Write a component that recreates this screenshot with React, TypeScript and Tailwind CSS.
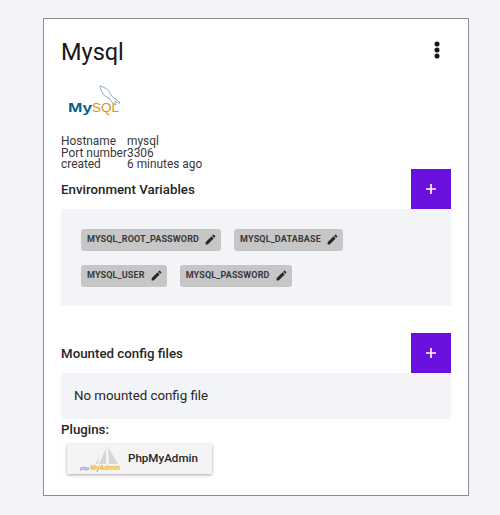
const variables = [
  ["MYSQL_ROOT_PASSWORD", "MYSQL_DATABASE"],
  ["MYSQL_USER", "MYSQL_PASSWORD"],
];

function EditIcon() {
  return (
    <svg viewBox="0 0 24 24" className="w-[13px] h-[13px] ml-[5px] shrink-0" fill="#262626">
      <path d="M3 17.25V21h3.75L17.81 9.94l-3.75-3.75L3 17.25zM20.71 7.04a1 1 0 0 0 0-1.41l-2.34-2.34a1 1 0 0 0-1.41 0l-1.83 1.83 3.75 3.75 1.83-1.83z" />
    </svg>
  );
}

function AddButton() {
  return (
    <button className="w-10 h-10 bg-[#6a11e0] flex items-center justify-center shrink-0" aria-label="add">
      <svg viewBox="0 0 12 12" className="w-[12px] h-[12px]" stroke="white" strokeWidth="1.6">
        <path d="M6 1v10M1 6h10" />
      </svg>
    </button>
  );
}

function Tag({ name }: { name: string }) {
  return (
    <span className="h-[22px] pl-[6px] pr-[4px] rounded-[3px] bg-[#c6c6c6] flex items-center text-[9px] font-bold tracking-[0.15px] text-[#393939]">
      {name}
      <EditIcon />
    </span>
  );
}

function MysqlLogo() {
  return (
    <svg viewBox="0 0 54 30" className="w-[54px] h-[30px] block">
      <path
        d="M33 1c4 1 8 3 10 7 1 3 4 5 7 7 1 1 2 2 3 3-2 0-4-1-5-2 0 1 0 2 1 4-3-1-5-4-7-7-3-1-6-3-7-6-1-2-2-4-2-6z"
        fill="none"
        stroke="#5d87a1"
        strokeWidth="0.7"
      />
      <text x="1" y="26.5" fontSize="13" fontWeight="700" fill="#00618a" fontFamily="'Liberation Sans', sans-serif" textLength="24" lengthAdjust="spacingAndGlyphs">My</text>
      <text x="25" y="26.5" fontSize="12" fill="#e48e00" fontFamily="'Liberation Sans', sans-serif" textLength="27" lengthAdjust="spacingAndGlyphs">SQL</text>
    </svg>
  );
}

function PmaLogo() {
  return (
    <svg viewBox="0 0 42 26" className="w-[42px] h-[26px] block overflow-visible">
      <path d="M26 2l-7 16h7zM28 1l1 17h9zM19 8l-3 10h2z" fill="#d6d6d6" />
      <text x="0" y="24" fontSize="5" fontStyle="italic" fontWeight="700" fill="#8a93c4" fontFamily="'Liberation Sans', sans-serif">php</text>
      <text x="10.5" y="24" fontSize="7.5" fontWeight="700" fill="#f2a93b" fontFamily="'Liberation Sans', sans-serif" textLength="29.5" lengthAdjust="spacingAndGlyphs">MyAdmin</text>
    </svg>
  );
}

export default function App() {
  return (
    <div className="min-h-[515px] bg-[#f4f4f8] pt-[18px] pl-[43px] text-[#161616] font-['Roboto','Noto_Sans',sans-serif]">
      <div className="w-[426px] h-[478px] bg-white border border-[#8d8d8d] px-[17px] pt-[15px]">
        <div className="flex items-center justify-between h-[36px]">
          <h1 className="text-[23.5px] leading-[36px]">Mysql</h1>
          <svg viewBox="0 0 6 18" className="w-[6px] h-[18px] mr-[11px] -mt-[4px]" fill="#161616">
            <circle cx="3" cy="3" r="2.5" />
            <circle cx="3" cy="9" r="2.5" />
            <circle cx="3" cy="15" r="2.5" />
          </svg>
        </div>

        <div className="ml-[6px] mt-[15px]">
          <MysqlLogo />
        </div>

        <div className="mt-[21px] grid grid-cols-[66px_1fr] text-[11.9px] leading-[11.5px] text-[#393939] whitespace-nowrap">
          <span>Hostname</span>
          <span>mysql</span>
          <span>Port number</span>
          <span>3306</span>
          <span>created</span>
          <span>6 minutes ago</span>
        </div>

        <div className="flex items-center justify-between mt-[-2px]">
          <h2 className="text-[13.3px] font-medium text-[#262626] pt-[3px]">Environment Variables</h2>
          <AddButton />
        </div>
        <div className="h-[97px] bg-[#f2f4f8] p-[20px] flex flex-col gap-[14px]">
          {variables.map((row) => (
            <div key={row[0]} className="flex gap-[13px]">
              {row.map((name) => (
                <Tag key={name} name={name} />
              ))}
            </div>
          ))}
        </div>

        <div className="flex items-center justify-between mt-[27px]">
          <h2 className="text-[13.3px] font-medium text-[#262626] pt-[3px]">Mounted config files</h2>
          <AddButton />
        </div>
        <div className="h-[46px] bg-[#f2f4f8] pl-[13px] pt-[1px] flex items-center text-[13.3px] text-[#262626]">
          No mounted config file
        </div>

        <div className="pt-[1px] text-[13.3px] font-medium text-[#262626] leading-[20px]">Plugins:</div>
        <div className="ml-[6px] mt-[4px] w-[145px] h-[30px] bg-[#f4f4f4] shadow-[0_1px_3px_rgba(0,0,0,0.35)] flex items-center">
          <div className="ml-[13px] mr-[6px]">
            <PmaLogo />
          </div>
          <span className="text-[11.6px] font-medium text-[#262626]">PhpMyAdmin</span>
        </div>
      </div>
    </div>
  );
}
